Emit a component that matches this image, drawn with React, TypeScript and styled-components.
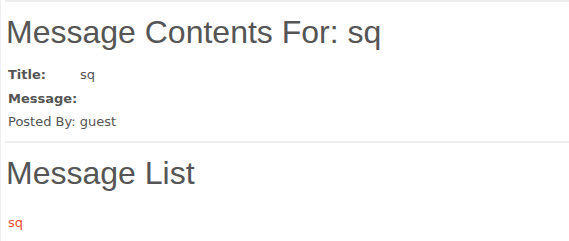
import React from "react"
import styled, { createGlobalStyle } from "styled-components"

const GlobalStyle = createGlobalStyle`
  body {
    margin: 0;
    background: #fff;
    font-family: "DejaVu Sans", sans-serif;
    color: #555;
  }
`;

const Page = styled.div`
  border-left: 1px solid #eef0f3;
  padding: 0 0 0 4px;
  min-height: 241px;
  box-sizing: border-box;
`;

const Rule = styled.hr`
  border: 0;
  border-top: 2px solid #eee;
  margin: 0;
`;

const Heading = styled.h1<{ $top: number }>`
  font-family: "Liberation Sans", Arial, sans-serif;
  font-weight: normal;
  font-size: 32px;
  color: #555;
  margin: ${(props) => props.$top}px 0 13px 1px;
  line-height: 36px;
`;

const Details = styled.div`
  display: grid;
  grid-template-columns: 72px auto;
  padding-left: 3px;
  font-size: 13px;
  margin-bottom: 7px;
`;

const Label = styled.div`
  font-weight: bold;
  line-height: 23.5px;
`;

const Value = styled.div`
  line-height: 23.5px;
`;

const Posted = styled.div`
  grid-column: 1 / 3;
  line-height: 23.5px;
`;

const MessageLink = styled.a`
  display: inline-block;
  margin: 11px 0 0 3px;
  font-size: 13px;
  color: #e74c3c;
  text-decoration: none;
`;

export default function App() {
    return (
        <>
            <GlobalStyle />
            <Page>
                <Rule />
                <Heading $top={12}>Message Contents For: sq</Heading>
                <Details>
                    <Label>Title:</Label>
                    <Value>sq</Value>
                    <Label>Message:</Label>
                    <Value></Value>
                    <Posted>Posted By: guest</Posted>
                </Details>
                <Rule />
                <Heading $top={12}>Message List</Heading>
                <MessageLink href="#">sq</MessageLink>
            </Page>
        </>
    )
}
